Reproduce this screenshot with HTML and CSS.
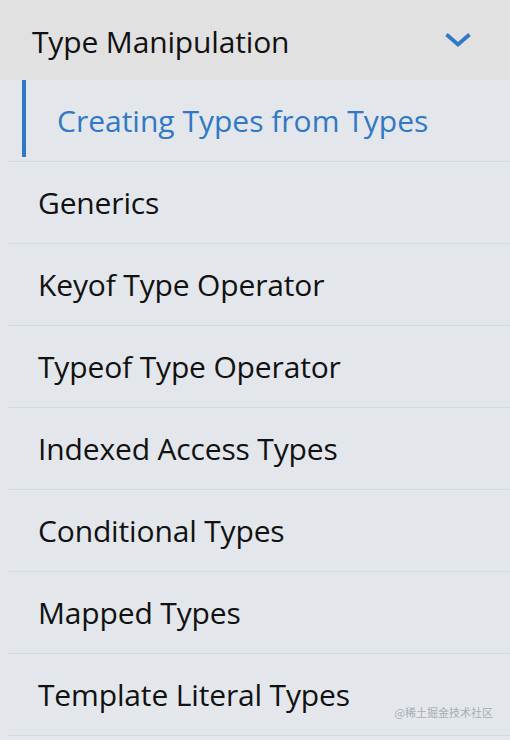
FILE: index.html
```html
<!DOCTYPE html>
<html>
<head>
<meta charset="utf-8">
<link rel="stylesheet" href="styles.css">
</head>
<body>
<nav class="sidebar">
  <div class="section-head">
    <span class="section-title">Type Manipulation</span>
    <svg class="chevron" width="28" height="18" viewBox="0 0 28 18"><path d="M2.5 3.5 L14 13.5 L25.5 3.5" fill="none" stroke="#3178c6" stroke-width="3.8" stroke-linecap="butt" stroke-linejoin="miter"/></svg>
  </div>
  <ul class="items">
    <li class="item active"><span>Creating Types from Types</span></li>
    <li class="item"><span>Generics</span></li>
    <li class="item"><span>Keyof Type Operator</span></li>
    <li class="item"><span>Typeof Type Operator</span></li>
    <li class="item"><span>Indexed Access Types</span></li>
    <li class="item"><span>Conditional Types</span></li>
    <li class="item"><span>Mapped Types</span></li>
    <li class="item"><span>Template Literal Types</span></li>
  </ul>
  <div class="watermark">@稀土掘金技术社区</div>
</nav>
</body>
</html>
```
FILE: styles.css
```css
html, body {
  margin: 0;
  padding: 0;
}
body {
  width: 510px;
  height: 740px;
  overflow: hidden;
  background: #e3e7ec;
  font-family: "Open Sans", "Noto Sans", sans-serif;
}
.sidebar {
  position: relative;
  height: 740px;
}
.section-head {
  height: 80px;
  box-sizing: border-box;
  background: #e1e1e1;
  display: flex;
  align-items: center;
  justify-content: space-between;
  padding: 3px 38px 0 32px;
}
.section-title {
  font-size: 30px;
  font-weight: 400;
  color: #111;
  letter-spacing: -0.15px;
}
.chevron {
  display: block;
  margin-top: -3px;
}
.items {
  list-style: none;
  margin: 0;
  padding: 0;
}
.item {
  height: 81px;
  border-bottom: 1px solid #d6dbe1;
  margin-left: 8px;
  display: flex;
  align-items: center;
  padding-left: 30px;
  font-size: 30px;
  color: #111;
  letter-spacing: -0.15px;
}
.item.active {
  color: #3178c6;
  padding-left: 49px;
  position: relative;
  letter-spacing: 0;
}
.item.active::before {
  content: "";
  position: absolute;
  left: 14px;
  top: 0;
  width: 4px;
  height: 77px;
  background: #3178c6;
}
.watermark {
  position: absolute;
  right: 17px;
  bottom: 20px;
  font-size: 11px;
  color: #a8adb3;
  font-family: "Noto Sans CJK SC", sans-serif;
}
```
